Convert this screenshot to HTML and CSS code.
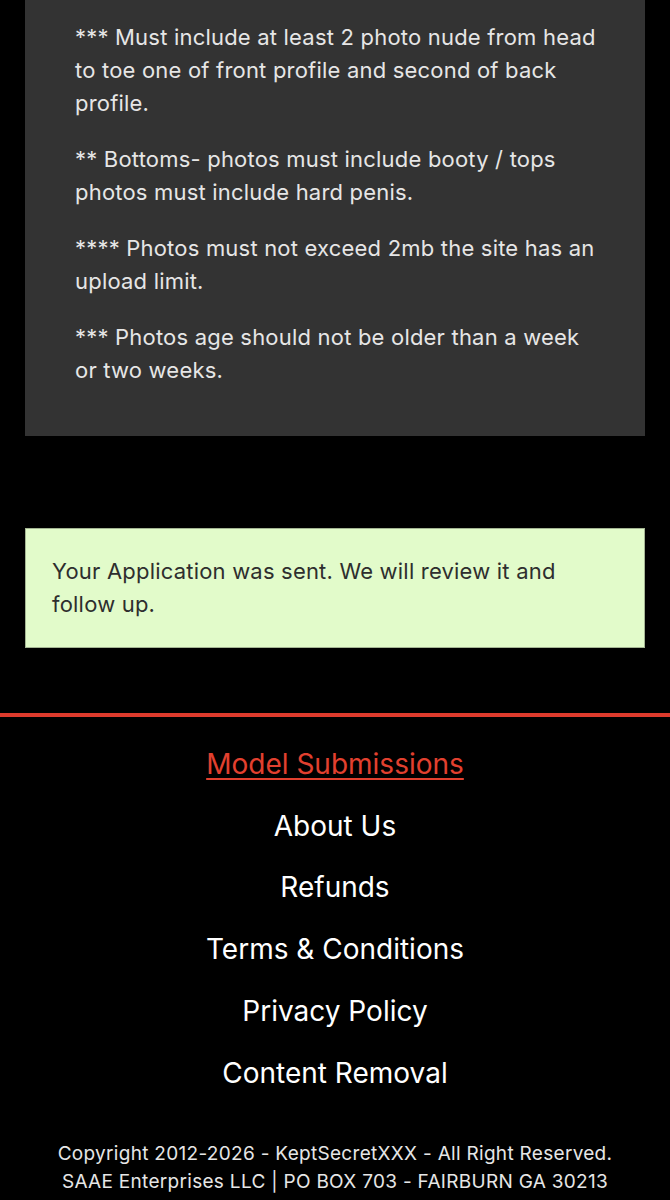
FILE: index.html
```html
<!DOCTYPE html>
<html lang="en">
<head>
    <meta charset="UTF-8">
    <meta name="viewport" content="width=device-width, initial-scale=1.0">
    <title>Model Submissions</title>
    <link rel="stylesheet" href="styles.css">
</head>
<body>
    <div class="rules">
        <p>*** Must include at least 2 photo nude from head to toe one of front profile and second of back profile.</p>
        <p>** Bottoms- photos must include booty / tops photos must include hard penis.</p>
        <p>**** Photos must not exceed 2mb the site has an upload limit.</p>
        <p>*** Photos age should not be older than a week or two weeks.</p>
    </div>

    <div class="notice">
        Your Application was sent. We will review it and follow up.
    </div>

    <div class="footer">
        <ul class="footer-links">
            <li><a href="#" class="active">Model Submissions</a></li>
            <li><a href="#">About Us</a></li>
            <li><a href="#">Refunds</a></li>
            <li><a href="#">Terms &amp; Conditions</a></li>
            <li><a href="#">Privacy Policy</a></li>
            <li><a href="#">Content Removal</a></li>
        </ul>
        <div class="copyright">
            Copyright 2012-2026 - KeptSecretXXX - All Right Reserved.<br>
            SAAE Enterprises LLC | PO BOX 703 - FAIRBURN GA 30213
        </div>
    </div>
</body>
</html>
```

FILE: styles.css
```css
body {
    font-family: Inter, Roboto, "Liberation Sans", sans-serif;
    margin: 0;
    padding: 0;
    background-color: #000;
    color: #e6e6e6;
}
.rules {
    margin: 0 25px;
    padding: 21px 45px 49px 50px;
    background-color: #333;
    font-size: 22px;
    letter-spacing: 0.2px;
    line-height: 33px;
}
.rules p {
    margin: 0 0 23px 0;
}
.rules p:last-child {
    margin-bottom: 0;
}
.notice {
    margin: 92px 25px 0 25px;
    padding: 26px 40px 26px 26px;
    background-color: #e2fbca;
    border: 1px solid #a4b593;
    color: #2e2e2e;
    font-size: 22px;
    letter-spacing: 0.2px;
    line-height: 33px;
}
.footer {
    margin-top: 65px;
    border-top: 4px solid #dd3a2c;
    padding-top: 17px;
    text-align: center;
}
.footer-links {
    list-style: none;
    margin: 0;
    padding: 0;
}
.footer-links li {
    font-size: 28px;
    line-height: 61.7px;
}
.footer-links a {
    color: #fff;
    text-decoration: none;
}
.footer-links a.active {
    color: #e2402f;
    text-decoration: underline;
    text-underline-offset: 4px;
    text-decoration-thickness: 2px;
}
.copyright {
    margin-top: 36px;
    font-size: 19px;
    letter-spacing: 0.3px;
    line-height: 28px;
    color: #e6e6e6;
}
```
